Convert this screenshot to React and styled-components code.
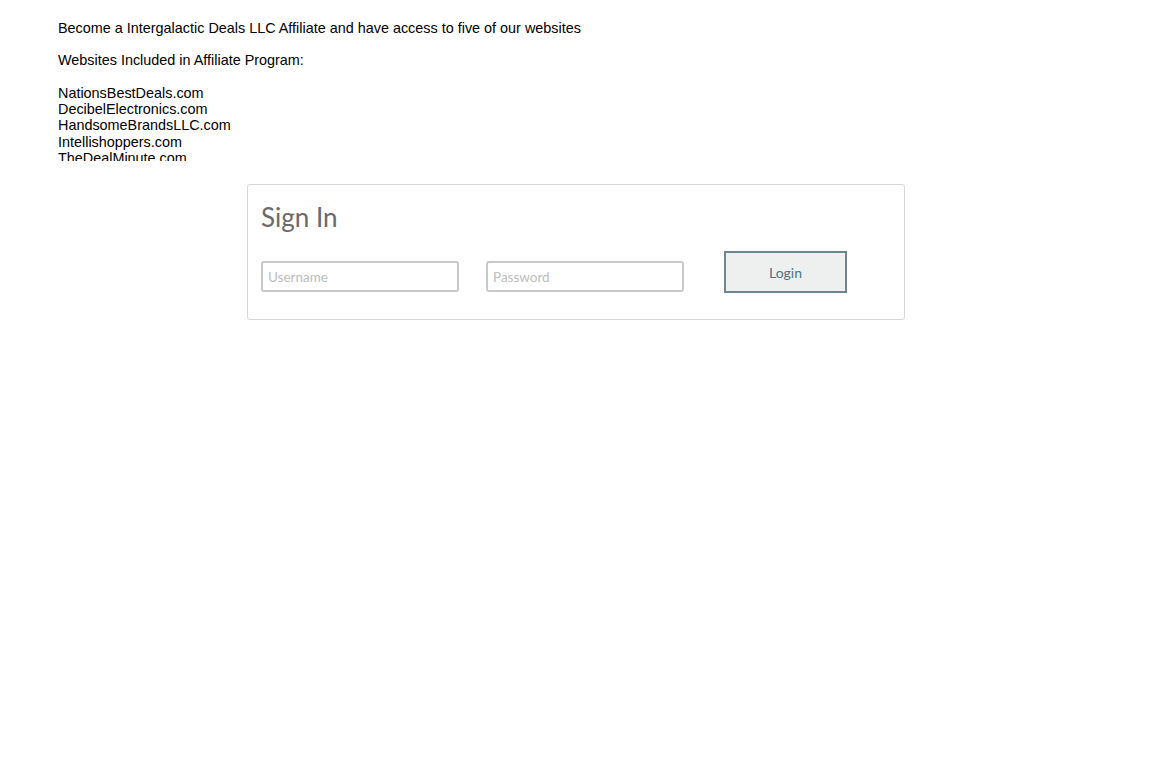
import React from 'react'
import styled, { createGlobalStyle } from 'styled-components'

const GlobalStyle = createGlobalStyle`
    html, body {
        margin: 0;
        padding: 0;
        background: #fff;
    }
    body {
        font-family: "Liberation Sans", Arial, sans-serif;
    }
`

const Page = styled.div`
    width: 1152px;
    min-height: 768px;
    background: #fff;
`

const Intro = styled.div`
    padding: 20px 0 0 58px;
    height: 141px;
    overflow: hidden;
    color: #000;
    font-size: 14.4px;
    line-height: 16px;

    p {
        margin: 0 0 16px;
    }
`

const SiteList = styled.div`
    margin-top: 17px;

    div {
        line-height: 16.2px;
    }
`

const Card = styled.div`
    width: 658px;
    margin: 23px auto 0;
    box-sizing: border-box;
    border: 1px solid #d6d6d6;
    border-radius: 3px;
    padding: 16px 13px 27px;
    font-family: Lato, "Noto Sans", sans-serif;
`

const Title = styled.h2`
    margin: 0;
    font-size: 26px;
    font-weight: 400;
    line-height: 32px;
    color: #6a6a6a;
`

const Row = styled.div`
    display: flex;
    align-items: flex-end;
    margin-top: 18px;
`

const Field = styled.input`
    width: 198px;
    height: 31px;
    box-sizing: border-box;
    border: 2px solid #c9c9c9;
    border-radius: 3px;
    padding: 0 5px;
    margin-right: ${p => p.$gap}px;
    font-family: inherit;
    font-size: 13.5px;
    color: #333;
    outline: none;

    &::placeholder {
        color: #bdbdbd;
    }
`

const Button = styled.button`
    width: 123px;
    height: 42px;
    margin-bottom: -1px;
    box-sizing: border-box;
    background: #eef0f0;
    border: 2px solid #6f8690;
    border-radius: 0;
    font-family: inherit;
    font-size: 14px;
    color: #4d7283;
    cursor: pointer;
`

const sites = [
    'NationsBestDeals.com',
    'DecibelElectronics.com',
    'HandsomeBrandsLLC.com',
    'Intellishoppers.com',
    'TheDealMinute.com',
]

const App = () => {
    return (
        <Page>
            <GlobalStyle />
            <Intro>
                <p>Become a Intergalactic Deals LLC Affiliate and have access to five of our websites</p>
                <p>Websites Included in Affiliate Program:</p>
                <SiteList>
                    {sites.map(s => <div key={s}>{s}</div>)}
                </SiteList>
            </Intro>
            <Card>
                <Title>Sign In</Title>
                <Row>
                    <Field type="text" placeholder="Username" $gap={27} />
                    <Field type="password" placeholder="Password" $gap={40} />
                    <Button>Login</Button>
                </Row>
            </Card>
        </Page>
    )
}

export default App
